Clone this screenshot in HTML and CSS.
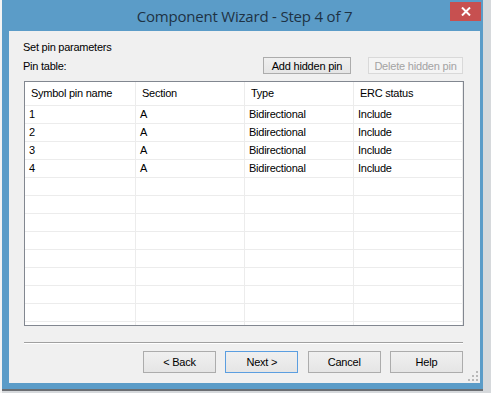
FILE: index.html
```html
<!DOCTYPE html>
<html lang="en">
<head>
  <meta charset="UTF-8" />
  <title>Component Wizard - Step 4 of 7</title>
  <link rel="stylesheet" href="styles.css">
</head>
<body>
<div class="window">
  <div class="titlebar">
    <span></span>
    <h1 class="title">Component Wizard - Step 4 of 7</h1>
    <button class="close" type="button" aria-label="Close">
      <svg width="10" height="9" viewBox="0 0 10 9"><path d="M1 0.5 L9 8.5 M9 0.5 L1 8.5" stroke="#fff" stroke-width="2" fill="none"/></svg>
    </button>
  </div>

  <div class="client">
    <p class="heading">Set pin parameters</p>

    <div class="toolbar">
      <span class="label">Pin table:</span>
      <div class="toolbar-buttons">
        <button class="btn btn-add" type="button">Add hidden pin</button>
        <button class="btn btn-del" type="button" disabled>Delete hidden pin</button>
      </div>
    </div>

    <!-- pin list -->
    <div class="listview">
      <div class="lv-grid">
        <div class="th">Symbol pin name</div><div class="th">Section</div><div class="th">Type</div><div class="th">ERC status</div>

        <div class="td">1</div><div class="td">A</div><div class="td">Bidirectional</div><div class="td">Include</div>
        <div class="td">2</div><div class="td">A</div><div class="td">Bidirectional</div><div class="td">Include</div>
        <div class="td">3</div><div class="td">A</div><div class="td">Bidirectional</div><div class="td">Include</div>
        <div class="td">4</div><div class="td">A</div><div class="td">Bidirectional</div><div class="td">Include</div>

        <div class="td"></div><div class="td"></div><div class="td"></div><div class="td"></div>
        <div class="td"></div><div class="td"></div><div class="td"></div><div class="td"></div>
        <div class="td"></div><div class="td"></div><div class="td"></div><div class="td"></div>
        <div class="td"></div><div class="td"></div><div class="td"></div><div class="td"></div>
        <div class="td"></div><div class="td"></div><div class="td"></div><div class="td"></div>
        <div class="td"></div><div class="td"></div><div class="td"></div><div class="td"></div>
        <div class="td"></div><div class="td"></div><div class="td"></div><div class="td"></div>
        <div class="td"></div><div class="td"></div><div class="td"></div><div class="td"></div>
        <div class="td"></div><div class="td"></div><div class="td"></div><div class="td"></div>
      </div>
    </div>

    <hr class="sep">

    <div class="footer">
      <button class="btn btn-nav" type="button">&lt; Back</button>
      <button class="btn btn-nav btn-default" type="button">Next &gt;</button>
      <button class="btn btn-nav" type="button">Cancel</button>
      <button class="btn btn-nav" type="button">Help</button>
    </div>

    <svg class="grip" width="12" height="12" viewBox="0 0 12 12">
      <rect x="8" y="0" width="2" height="2" fill="#b9b9b9"/>
      <rect x="4" y="4" width="2" height="2" fill="#b9b9b9"/>
      <rect x="8" y="4" width="2" height="2" fill="#b9b9b9"/>
      <rect x="0" y="8" width="2" height="2" fill="#b9b9b9"/>
      <rect x="4" y="8" width="2" height="2" fill="#b9b9b9"/>
      <rect x="8" y="8" width="2" height="2" fill="#b9b9b9"/>
    </svg>
  </div>
</div>
</body>
</html>
```

FILE: styles.css
```css
:root { --frame:#5b9cc8; --face:#f0f0f0; --grid:#ececec; --text:#000; }
*{box-sizing:border-box;margin:0;padding:0}
html,body{height:100%}
body{background:#d6d9dc;overflow:hidden;font-family:"Liberation Sans",Arial,sans-serif;font-size:11px;letter-spacing:-.25px;color:var(--text);border-left:2px solid #f4f4f4}

.window {
  width: 481px;
  height: 389px;
  background: var(--frame);
  padding: 0 3px 6px 7px;
  display: flex;
  flex-direction: column;
  box-shadow: 0 2px 0 #6b6e72;
}

.titlebar{height:31px;display:grid;grid-template-columns:1fr auto 1fr;align-items:start}
.title{font-family:"Open Sans","Noto Sans",sans-serif;font-weight:400;font-size:15px;letter-spacing:-.2px;line-height:31px;color:#1e3244;padding-top:1px}
.close{justify-self:end;margin:2px -1px 0 0;width:31px;height:19px;border:0;background:#c75050;display:flex;align-items:center;justify-content:center}

.client {
  flex: 1;
  position: relative;
  background: var(--face);
  padding: 9px 16px 0 14px;
  display: flex;
  flex-direction: column;
}

.heading{line-height:14px}
.toolbar{margin-top:3px;display:flex;align-items:center;justify-content:space-between}
.toolbar .label{padding-top:1px}
.toolbar-buttons{display:flex;gap:17px;margin-right:1px}

.btn{font-family:inherit;font-size:11px;letter-spacing:-.2px;color:#000;background:linear-gradient(#f0f0f0,#e5e5e5);border:1px solid #acacac;border-radius:0;line-height:14px}
.btn-add{width:88px;height:17px}
.btn-del{width:95px;height:17px}
.btn:disabled{background:#f4f4f4;border-color:#d9d9d9;color:#a3a3a3}

.listview{margin:7px 0 0 1px;width:440px;height:245px;border:1px solid #828790;background:#fff;overflow:hidden}
.lv-grid{display:grid;grid-template-columns:111px 109px 109px 109px}
.th{height:24px;line-height:23px;padding-left:6px;border-right:1px solid var(--grid);border-bottom:1px solid var(--grid)}
.td{height:18px;line-height:17px;padding-left:4px;border-right:1px solid var(--grid);border-bottom:1px solid var(--grid)}

.sep{margin:16px 0 0 1px;width:439px;border:0;border-top:1px solid #a0a0a0;border-bottom:1px solid #fff}

.footer{margin:7px 1px 0 0;display:flex;justify-content:flex-end;gap:9.33px}
.btn-nav{width:73px;height:22px}
.btn-default{border-color:#5b9ee0}

.grip{position:absolute;right:0;bottom:0}
```
